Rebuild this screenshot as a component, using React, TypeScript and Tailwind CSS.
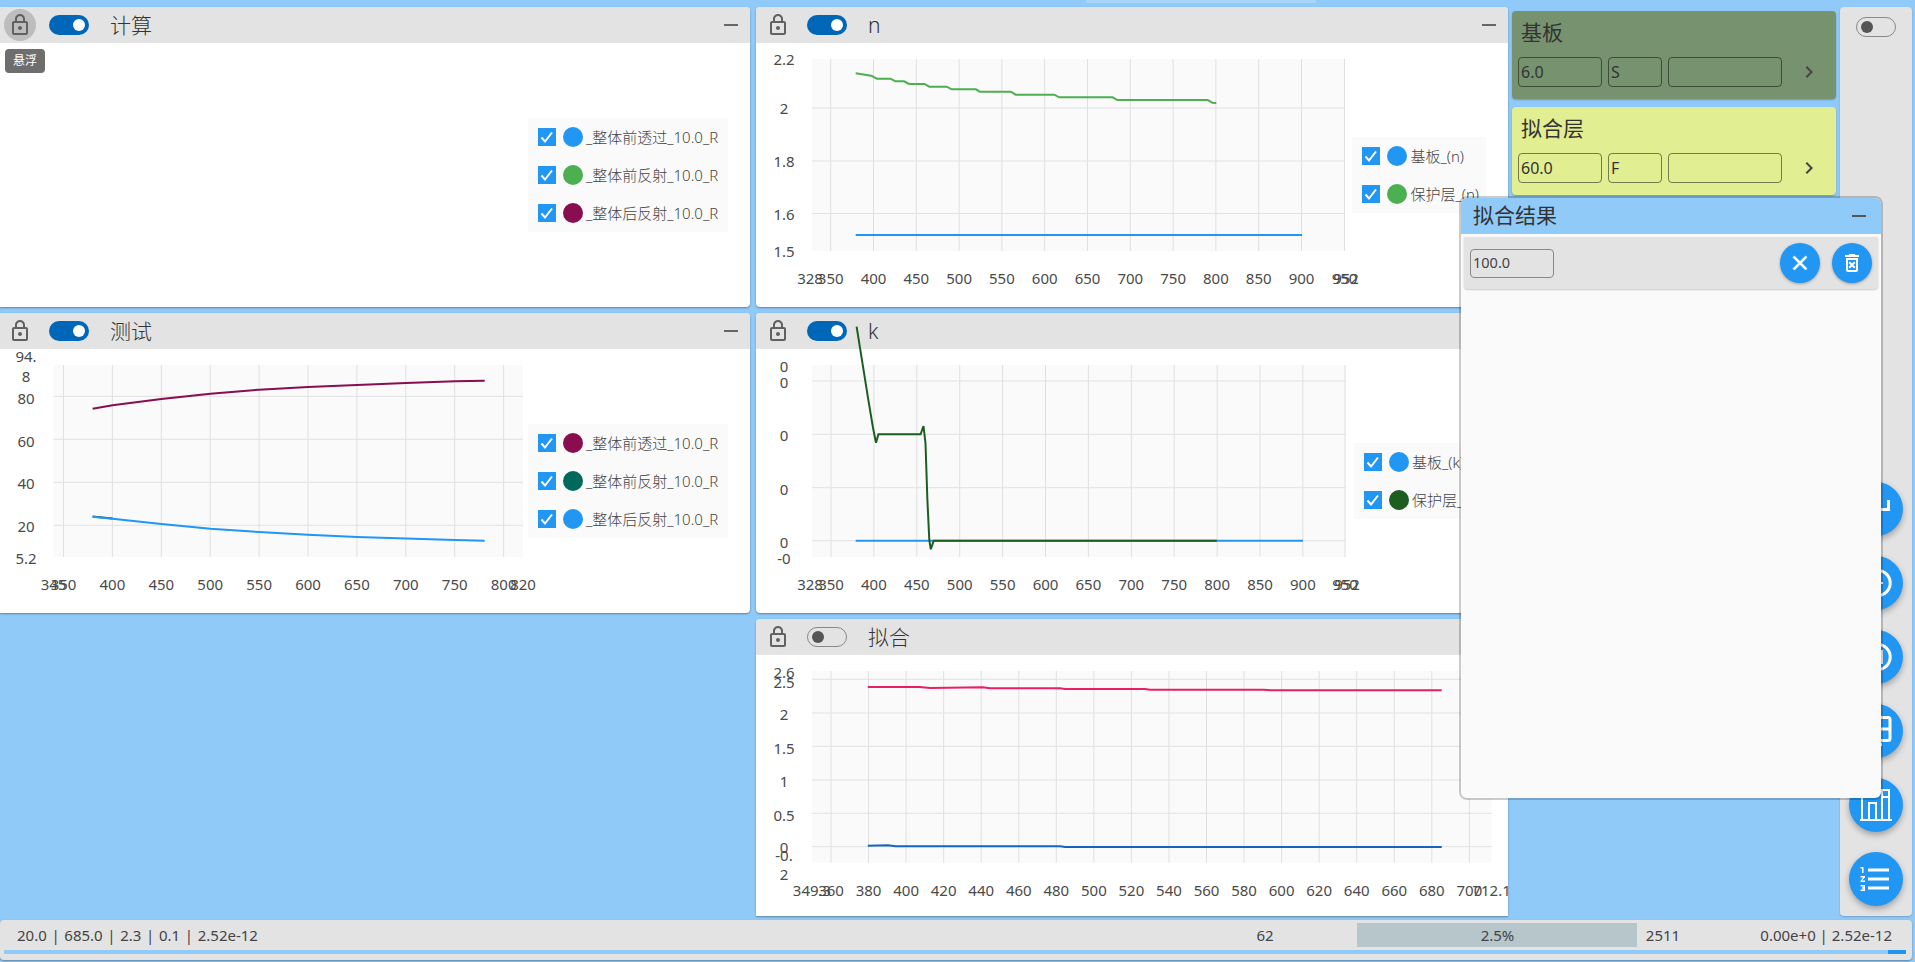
import { type ReactNode } from 'react';

// ---------------------------------------------------------------------------
// Chart data. All coordinates are page pixels, each svg's viewBox starts at its own page offset.
// ---------------------------------------------------------------------------

type Pt = [number, number];

interface Series {
    color: string;
    points: Pt[];
}

interface ChartDef {
    left: number;
    top: number;
    width: number;
    height: number;
    plot: { x1: number; y1: number; x2: number; y2: number };
    labelX: number;
    labelY: number;
    hLines: number[];
    xTicks: { label: string; x: number; line?: boolean }[];
    yLabels: { label: string; y: number }[];
    series: Series[];
}

const ticks = (from: number, to: number, step: number, x0: number, dx: number) => {
    const out: { label: string; x: number; line: boolean }[] = [];
    for (let v = from, i = 0; v <= to; v += step, i++) {
        out.push({ label: String(v), x: x0 + i * dx, line: true });
    }
    return out;
};

const nChart: ChartDef = {
    left: 756,
    top: 43,
    width: 596,
    height: 264,
    plot: { x1: 812, y1: 59, x2: 1345, y2: 251 },
    labelX: 784,
    labelY: 277.5,
    hLines: [108, 161, 213.5],
    xTicks: [{ label: '328', x: 810 }, ...ticks(350, 900, 50, 830.7, 42.8), { label: '950', x: 1344.5, line: true }, { label: '952', x: 1346 }],
    yLabels: [
        { label: '2.2', y: 59 },
        { label: '2', y: 108 },
        { label: '1.8', y: 161 },
        { label: '1.6', y: 214 },
        { label: '1.5', y: 251 },
    ],
    series: [
        {
            color: '#2196f3',
            points: [
                [855.7, 235],
                [1302, 235],
            ],
        },
        {
            color: '#4caf50',
            points: [
                [855.7, 73.3],
                [871.2, 75.7],
                [877, 78.7],
                [890.6, 78.7],
                [895.4, 81.3],
                [904.1, 81.3],
                [909, 84],
                [924.5, 84],
                [929.3, 86.7],
                [946.8, 86.7],
                [951.6, 89.3],
                [975.9, 89.3],
                [979.8, 91.7],
                [1010.8, 91.7],
                [1015.6, 94.7],
                [1054.4, 94.7],
                [1059.2, 97.3],
                [1112.6, 97.3],
                [1117.4, 100],
                [1207.6, 100],
                [1212.4, 102.7],
                [1216.3, 103],
            ],
        },
    ],
};

const kChart: ChartDef = {
    left: 756,
    top: 349,
    width: 596,
    height: 264,
    plot: { x1: 812, y1: 365, x2: 1346, y2: 557 },
    labelX: 784,
    labelY: 583.5,
    hLines: [381, 434.3, 487.7, 540.7],
    xTicks: [{ label: '328', x: 810 }, ...ticks(350, 900, 50, 831, 42.9), { label: '950', x: 1345, line: true }, { label: '952', x: 1347 }],
    yLabels: [
        { label: '0', y: 365.5 },
        { label: '0', y: 381.5 },
        { label: '0', y: 435 },
        { label: '0', y: 489 },
        { label: '0', y: 541.5 },
        { label: '-0', y: 558 },
    ],
    series: [
        {
            color: '#2196f3',
            points: [
                [855.7, 540.7],
                [1303, 540.7],
            ],
        },
        {
            color: '#1b5e20',
            points: [
                [856.6, 326.7],
                [862.5, 363.3],
                [867.8, 396.7],
                [873.1, 428.3],
                [876, 442.7],
                [878.4, 434.3],
                [920.6, 434.3],
                [923.5, 426],
                [925.5, 443.3],
                [927.4, 500],
                [929.3, 540],
                [930.8, 549.3],
                [933.7, 540.7],
                [1216.8, 540.7],
            ],
        },
    ],
};

const testChart: ChartDef = {
    left: -2,
    top: 349,
    width: 530,
    height: 264,
    plot: { x1: 53.5, y1: 365, x2: 523, y2: 557 },
    labelX: 26,
    labelY: 583.5,
    hLines: [396.3, 439.3, 482.3, 525.3],
    xTicks: [{ label: '345', x: 53.5 }, ...ticks(350, 800, 50, 63.5, 48.9), { label: '820', x: 523 }],
    yLabels: [
        { label: '94.', y: 356 },
        { label: '8', y: 376 },
        { label: '80', y: 398 },
        { label: '60', y: 441 },
        { label: '40', y: 483 },
        { label: '20', y: 526 },
        { label: '5.2', y: 558 },
    ],
    series: [
        {
            color: '#00695c',
            points: [
                [92.6, 516.4],
                [112.5, 518.4],
            ],
        },
        {
            color: '#2196f3',
            points: [
                [92.6, 516.8],
                [112.5, 518.8],
                [161.4, 524],
                [210.4, 528.8],
                [259, 532],
                [308, 534.8],
                [357, 537],
                [406, 538.4],
                [455, 540],
                [484.7, 540.8],
            ],
        },
        {
            color: '#880e4f',
            points: [
                [92.6, 408.7],
                [112.5, 405.3],
                [161.4, 399],
                [210.4, 393.7],
                [259, 389.7],
                [308, 387],
                [357, 385],
                [406, 383],
                [455, 381.3],
                [484.7, 380.7],
            ],
        },
    ],
};

const fitChart: ChartDef = {
    left: 756,
    top: 655,
    width: 752,
    height: 261,
    plot: { x1: 812, y1: 671, x2: 1491.6, y2: 862.7 },
    labelX: 784,
    labelY: 889.5,
    hLines: [679.3, 713, 746.3, 780, 813.3, 846.7],
    xTicks: [{ label: '349.3', x: 812 }, ...ticks(360, 700, 20, 831, 37.55), { label: '712.1', x: 1491.6 }],
    yLabels: [
        { label: '2.6', y: 672 },
        { label: '2.5', y: 681.5 },
        { label: '2', y: 714 },
        { label: '1.5', y: 748 },
        { label: '1', y: 781 },
        { label: '0.5', y: 815 },
        { label: '0', y: 847 },
        { label: '-0.', y: 855 },
        { label: '2', y: 874 },
    ],
    series: [
        {
            color: '#e91e63',
            points: [
                [867.8, 687],
                [919.6, 687],
                [930.3, 688],
                [982.7, 687.3],
                [989.9, 688.3],
                [1060.2, 688.3],
                [1065, 689],
                [1145, 689],
                [1149.9, 689.7],
                [1263.8, 689.7],
                [1271, 690.3],
                [1441.7, 690.3],
            ],
        },
        {
            color: '#1565c0',
            points: [
                [867.8, 845.7],
                [888, 845.3],
                [895.4, 846.3],
                [1060.2, 846.3],
                [1065, 847],
                [1441.7, 847],
            ],
        },
    ],
};

// ---------------------------------------------------------------------------
// Icons
// ---------------------------------------------------------------------------

function Glyph({ d, size = 24, bold = false, className }: { d: string; size?: number; bold?: boolean; className?: string }) {
    return (
        <svg width={size} height={size} viewBox="0 0 24 24" className={className} fill="currentColor">
            <path d={d} stroke={bold ? 'currentColor' : 'none'} strokeWidth={bold ? 0.7 : 0} />
        </svg>
    );
}

const LOCK =
    'M18 8h-1V6c0-2.76-2.24-5-5-5S7 3.24 7 6v2H6c-1.1 0-2 .9-2 2v10c0 1.1.9 2 2 2h12c1.1 0 2-.9 2-2V10c0-1.1-.9-2-2-2zM9 6c0-1.66 1.34-3 3-3s3 1.34 3 3v2H9V6zm9 14H6V10h12v10zm-6-3c1.1 0 2-.9 2-2s-.9-2-2-2-2 .9-2 2 .9 2 2 2z';
const CHEVRON = 'M10 6 8.59 7.41 13.17 12l-4.58 4.59L10 18l6-6z';
const CLOSE = 'M19 6.41 17.59 5 12 10.59 6.41 5 5 6.41 10.59 12 5 17.59 6.41 19 12 13.41 17.59 19 19 17.59 13.41 12z';
const DELETE_FOREVER =
    'M14.12 10.47 12 12.59l-2.13-2.12-1.41 1.41L10.59 14l-2.12 2.12 1.41 1.41L12 15.41l2.12 2.12 1.41-1.41L13.41 14l2.12-2.12zM15.5 4l-1-1h-5l-1 1H5v2h14V4zM6 19c0 1.1.9 2 2 2h8c1.1 0 2-.9 2-2V7H6v12zM8 9h8v10H8V9z';
const LIST_NUMBERED =
    'M2 17h2v.5H3v1h1v.5H2v1h3v-4H2v1zm1-9h1V4H2v1h1v3zm-1 3h1.8L2 13.1v.9h3v-1H3.2L5 10.9V10H2v1zm5-6v2h14V5H7zm0 14h14v-2H7v2zm0-6h14v-2H7v2z';

// FAB artwork in its 54px circle
const fabIcons: ReactNode[] = [
    <polyline key="a" points="28,27.5 39.5,27.5 39.5,18" fill="none" stroke="#fff" strokeWidth={3} />,
    <g key="b" fill="none" stroke="#fff">
        <circle cx={28.7} cy={27} r={12.5} strokeWidth={3} />
        <path d="M22 27h12" strokeWidth={2} />
    </g>,
    <g key="c" fill="none" stroke="#fff">
        <circle cx={28.7} cy={27} r={12.5} strokeWidth={3} />
        <rect x={24} y={21} width={9} height={12} strokeWidth={2} />
    </g>,
    <g key="d" fill="none" stroke="#fff" strokeWidth={3}>
        <rect x={12} y={13.5} width={29} height={23} rx={2} />
        <path d="M12 25h29M24 40.5h9" />
    </g>,
    <g key="e" fill="none" stroke="#fff" strokeWidth={2}>
        <path d="M13 20v22M20 42V25h7v17M33 42V12h7v30M33 19h7M11 42h32" />
    </g>,
    <svg key="f" x={8.5} y={9} width={36} height={36} viewBox="0 0 24 24" fill="#fff">
        <path d={LIST_NUMBERED} />
    </svg>,
];

// ---------------------------------------------------------------------------
// Chart
// ---------------------------------------------------------------------------

function Chart({ def }: { def: ChartDef }) {
    const { plot } = def;
    return (
        <svg
            width={def.width}
            height={def.height}
            viewBox={`${def.left} ${def.top} ${def.width} ${def.height}`}
            className="block shrink-0 overflow-visible">
            <rect x={plot.x1} y={plot.y1} width={plot.x2 - plot.x1} height={plot.y2 - plot.y1} fill="#fafafa" />
            {def.xTicks
                .filter(tick => tick.line)
                .map(tick => (
                    <line key={tick.x} x1={tick.x} x2={tick.x} y1={plot.y1} y2={plot.y2} stroke="#e0e0e0" />
                ))}
            {def.hLines.map(y => (
                <line key={y} x1={plot.x1} x2={plot.x2} y1={y} y2={y} stroke="#e2e2e2" />
            ))}
            {def.series.map(s => (
                <polyline
                    key={s.color}
                    points={s.points.map(p => p.join(',')).join(' ')}
                    fill="none"
                    stroke={s.color}
                    strokeWidth={2}
                />
            ))}
            {def.yLabels.map(l => (
                <text
                    key={`${l.label}-${l.y}`}
                    x={def.labelX}
                    y={l.y}
                    textAnchor="middle"
                    dominantBaseline="central"
                    fontSize={15}
                    fill="#4a4a4a">
                    {l.label}
                </text>
            ))}
            {def.xTicks.map(tick => (
                <text
                    key={tick.label}
                    x={tick.x}
                    y={def.labelY}
                    textAnchor="middle"
                    dominantBaseline="central"
                    fontSize={15}
                    fill="#4a4a4a">
                    {tick.label}
                </text>
            ))}
        </svg>
    );
}

function Legend({ items, className }: { items: { label: string; color: string }[]; className?: string }) {
    return (
        <div className={`ml-auto mr-[22px] flex shrink-0 flex-col bg-[#fafafa] pl-[10px] pr-[7px] ${className ?? ''}`}>
            {items.map(item => (
                <div key={item.label} className="flex h-[38px] items-center">
                    <span className="flex h-[18px] w-[18px] items-center justify-center bg-[#2196f3]">
                        <svg width={18} height={18} viewBox="0 0 18 18">
                            <polyline points="3.5,9.5 7,13.5 14,4.5" fill="none" stroke="#fff" strokeWidth={2} />
                        </svg>
                    </span>
                    <span className="ml-[7px] h-[20px] w-[20px] rounded-full" style={{ backgroundColor: item.color }} />
                    <span className="ml-[3px] whitespace-nowrap text-[15px] font-light leading-[20px] text-[#444]">{item.label}</span>
                </div>
            ))}
        </div>
    );
}

// ---------------------------------------------------------------------------
// Panel
// ---------------------------------------------------------------------------

function Toggle({ on = true }: { on?: boolean }) {
    if (on) {
        return (
            <span className="flex h-[20px] w-[40px] items-center justify-end rounded-full bg-[#0067b8] pr-[4px]">
                <span className="h-[12px] w-[12px] rounded-full bg-white" />
            </span>
        );
    }
    return (
        <span className="flex h-[20px] w-[40px] items-center rounded-full border border-[#888] pl-[4px]">
            <span className="h-[12px] w-[12px] rounded-full bg-[#555]" />
        </span>
    );
}

function Panel({
    title,
    on = true,
    lockHover = false,
    className,
    children,
}: {
    title: string;
    on?: boolean;
    lockHover?: boolean;
    className?: string;
    children: ReactNode;
}) {
    return (
        <section className={`relative flex flex-col overflow-hidden bg-white shadow-[0_1px_2px_rgba(0,0,0,0.35)] ${className ?? 'rounded'}`}>
            <header className="flex h-[36px] shrink-0 items-center bg-[#e3e3e3] pl-[6px] pr-[12px] text-[#616161]">
                <span className={`flex h-[32px] w-[32px] items-center justify-center rounded-full ${lockHover ? 'bg-[#bdbdbd]' : ''}`}>
                    <Glyph d={LOCK} />
                </span>
                <span className="ml-[13px]">
                    <Toggle on={on} />
                </span>
                <span className="ml-[21px] pt-[1px] text-[21px] font-light leading-none text-[#333]">{title}</span>
                <span className="ml-auto h-[2px] w-[14px] bg-[#666]" />
            </header>
            <div className="flex min-h-0 flex-1 items-center">{children}</div>
        </section>
    );
}

// ---------------------------------------------------------------------------
// Layer cards, sidebar, floating window, status bar
// ---------------------------------------------------------------------------

function LayerCard({ title, thickness, kind, className }: { title: string; thickness: string; kind: string; className: string }) {
    return (
        <div className={`h-[88px] rounded px-[6px] shadow-[0_1px_2px_rgba(0,0,0,0.25)] ${className}`}>
            <div className="h-[46px] pl-[3px] pt-[6px] text-[21px] leading-[30px] text-[#333]">{title}</div>
            <div className="flex items-center gap-[6px] text-[16px] text-[#333]">
                <span className="flex h-[30px] w-[84px] items-center rounded border border-[#0000007a] pl-[2px]">{thickness}</span>
                <span className="flex h-[30px] w-[54px] items-center rounded border border-[#0000007a] pl-[2px]">{kind}</span>
                <span className="h-[30px] w-[114px] rounded border border-[#0000007a]" />
                <Glyph d={CHEVRON} className="ml-[9px] text-[#444]" />
            </div>
        </div>
    );
}

function RoundButton({ d, bold }: { d: string; bold?: boolean }) {
    return (
        <span className="flex h-[40px] w-[40px] items-center justify-center rounded-full bg-[#2196f3] text-white shadow-[0_1px_3px_rgba(0,0,0,0.3)]">
            <Glyph d={d} bold={bold} />
        </span>
    );
}

function FloatingResults() {
    return (
        <div className="absolute left-[1461px] top-[198px] flex h-[600px] w-[420px] flex-col rounded-md bg-[#fafafa] shadow-[0_0_0_2px_rgba(0,0,0,0.2)]">
            <div className="flex h-[36px] shrink-0 items-center rounded-t-md bg-[#90caf9] pl-[12px] pr-[15px] text-[21px] text-[#333]">
                拟合结果
                <span className="ml-auto h-[2px] w-[14px] bg-[#555]" />
            </div>
            <div className="mx-[3px] mt-[3px] flex h-[52px] items-center rounded-b bg-[#e3e3e3] pl-[6px] pr-[6px] shadow-[0_1px_2px_rgba(0,0,0,0.2)]">
                <span className="flex h-[29px] w-[84px] items-center rounded border border-[#888] pl-[2px] text-[14.5px] text-[#444]">100.0</span>
                <span className="ml-auto flex gap-[12px]">
                    <RoundButton d={CLOSE} bold />
                    <RoundButton d={DELETE_FOREVER} />
                </span>
            </div>
        </div>
    );
}

function Sidebar() {
    return (
        <aside className="ml-[4px] flex h-[909px] w-[72px] flex-col items-center justify-between rounded bg-[#e3e3e3] pb-[10px] pt-[10px] shadow-[0_1px_2px_rgba(0,0,0,0.2)]">
            <Toggle on={false} />
            <div className="flex flex-col gap-[20px]">
                {fabIcons.map((icon, i) => (
                    <span key={i} className="block h-[54px] w-[54px] rounded-full bg-[#2196f3] shadow-[0_3px_6px_rgba(0,0,0,0.3)]">
                        <svg width={54} height={54} viewBox="0 0 54 54">
                            {icon}
                        </svg>
                    </span>
                ))}
            </div>
        </aside>
    );
}

function StatusBar() {
    return (
        <footer className="mt-[3px] h-[40px] w-[1912px] rounded bg-[#e3e3e3] pt-[3px] text-[15px] text-[#444] shadow-[0_1px_2px_rgba(0,0,0,0.35)]">
            <div className="flex h-[24px] items-center leading-[24px]">
                <span className="w-[1173px] pl-[17px] [word-spacing:0.75px]">20.0 | 685.0 | 2.3 | 0.1 | 2.52e-12</span>
                <span className="w-[184px] text-center">62</span>
                <span className="w-[280px] border-l border-[#8edcb8] bg-[#b6c6ca] text-center">2.5%</span>
                <span className="w-[52px] text-center">2511</span>
                <span className="ml-auto pr-[20px]">0.00e+0 | 2.52e-12</span>
            </div>
            <div className="ml-[4px] mt-[3px] flex h-[4px] w-[1902px] justify-end bg-[#90caf9]">
                <span className="h-full w-[18px] bg-[#2196f3]" />
            </div>
        </footer>
    );
}

// ---------------------------------------------------------------------------
// App
// ---------------------------------------------------------------------------

export default function App() {
    return (
        <div className="relative h-[962px] w-[1915px] overflow-hidden bg-[#90caf9] font-['Noto_Sans','Noto_Sans_CJK_SC',sans-serif]">
            <div className="ml-[1086px] h-[3px] w-[230px] bg-[#a9d5f8]" />
            <div className="mt-[4px] flex h-[910px]">
                <div className="-ml-[2px] grid h-[909px] w-[1510px] shrink-0 grid-cols-[752px_752px] grid-rows-[300px_300px_297px] gap-[6px]">
                    <Panel title="计算" lockHover>
                        <Legend
                            className="w-[200px]"
                            items={[
                                { label: '_整体前透过_10.0_R', color: '#2196f3' },
                                { label: '_整体前反射_10.0_R', color: '#4caf50' },
                                { label: '_整体后反射_10.0_R', color: '#880e4f' },
                            ]}
                        />
                        <span className="absolute left-[7px] top-[42px] flex h-[24px] w-[40px] items-center justify-center rounded bg-[#6e6e6e] text-[12px] text-white">
                            悬浮
                        </span>
                    </Panel>
                    <Panel title="n">
                        <Chart def={nChart} />
                        <Legend
                            items={[
                                { label: '基板_(n)', color: '#2196f3' },
                                { label: '保护层_(n)', color: '#4caf50' },
                            ]}
                        />
                    </Panel>
                    <Panel title="测试">
                        <Chart def={testChart} />
                        <Legend
                            className="w-[200px]"
                            items={[
                                { label: '_整体前透过_10.0_R', color: '#880e4f' },
                                { label: '_整体前反射_10.0_R', color: '#00695c' },
                                { label: '_整体后反射_10.0_R', color: '#2196f3' },
                            ]}
                        />
                    </Panel>
                    <Panel title="k">
                        <Chart def={kChart} />
                        <Legend
                            items={[
                                { label: '基板_(k)', color: '#2196f3' },
                                { label: '保护层_(k)', color: '#1b5e20' },
                            ]}
                        />
                    </Panel>
                    <div />
                    <Panel title="拟合" on={false} className="rounded-t">
                        <Chart def={fitChart} />
                    </Panel>
                </div>
                <div className="ml-[4px] mt-[4px] flex w-[324px] shrink-0 flex-col gap-[8px]">
                    <LayerCard title="基板" thickness="6.0" kind="S" className="bg-[#77926f]" />
                    <LayerCard title="拟合层" thickness="60.0" kind="F" className="bg-[#e1ee91]" />
                </div>
                <Sidebar />
            </div>
            <StatusBar />
            <FloatingResults />
        </div>
    );
}
